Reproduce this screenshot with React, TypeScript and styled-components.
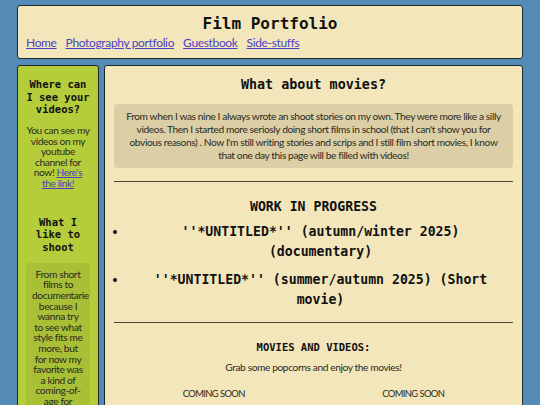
import styled, { createGlobalStyle } from "styled-components";

const GlobalStyle = createGlobalStyle`
  * {
    box-sizing: border-box;
  }

  body {
    margin: 0;
    background: #538ab6;
    font-family: Lato, "Noto Sans", sans-serif;
    color: #2a2a22;
    overflow: hidden;
  }
`;

const Page = styled.div`
  display: flex;
  flex-direction: column;
  gap: 6px;
  padding: 5px 17px 0 17px;
`;

const Box = styled.div<{ $tone?: "cream" | "green" }>`
  border: 1px solid #1d2727;
  border-radius: 3px;
  background: ${(p) => (p.$tone === "green" ? "#b6cd3b" : "#f3e6bb")};
`;

const Header = styled(Box)`
  height: 54px;
  padding: 8px 8px 0 8px;
`;

const Title = styled.h1`
  margin: 0;
  text-align: center;
  font-family: "DejaVu Sans Mono", monospace;
  font-size: 16px;
  line-height: 20px;
  color: #111;
`;

const Nav = styled.nav`
  display: flex;
  gap: 9px;
  margin-top: 1px;
`;

const Link = styled.a`
  color: #4b3fc4;
  text-decoration: underline;
`;

const NavLink = styled(Link)`
  font-size: 12px;
  line-height: 16px;
  letter-spacing: -0.35px;
`;

const Columns = styled.div`
  display: flex;
  gap: 5px;
  align-items: flex-start;
`;

const Sidebar = styled(Box)`
  width: 82px;
  height: 360px;
  padding: 12px 8px 0 8px;
  text-align: center;
`;

const SideHeading = styled.h3<{ $gap?: number }>`
  margin: ${(p) => p.$gap ?? 0}px 0 0 0;
  font-family: "DejaVu Sans Mono", monospace;
  font-size: 10.5px;
  line-height: 12.7px;
  color: #111;
`;

const SideText = styled.p`
  margin: 9px 0 0 0;
  font-size: 10.2px;
  line-height: 10.6px;
  letter-spacing: -0.4px;
`;

const SideCard = styled.div`
  margin-top: 9px;
  padding: 6px 6px;
  border-radius: 4px;
  background: #a8bf36;
  font-size: 10.2px;
  line-height: 10.6px;
  letter-spacing: -0.4px;
`;

const Main = styled(Box)`
  flex: 1;
  height: 360px;
  padding: 10px 9px 0 9px;
  text-align: center;
`;

const MainTitle = styled.h2`
  margin: 0;
  font-family: "DejaVu Sans Mono", monospace;
  font-size: 13.4px;
  line-height: 18px;
  color: #111;
`;

const Note = styled.div`
  margin-top: 10px;
  padding: 6px 8px;
  border-radius: 4px;
  background: #dccfa6;
  font-size: 10.2px;
  line-height: 13px;
  letter-spacing: -0.4px;
`;

const Rule = styled.hr`
  margin: 13px 0 0 0;
  border: none;
  border-top: 1px solid #4a4a3e;
`;

const SectionTitle = styled.h3<{ $small?: boolean }>`
  margin: ${(p) => (p.$small ? "16px 0 0 0" : "17px 0 0 0")};
  font-family: "DejaVu Sans Mono", monospace;
  font-size: ${(p) => (p.$small ? "10.5px" : "13.2px")};
  line-height: 16px;
  color: #111;
`;

const List = styled.ul`
  margin: 7px 0 0 0;
  padding: 0 0 0 14px;
  display: flex;
  flex-direction: column;
  gap: 9px;
`;

const Item = styled.li`
  font-family: "DejaVu Sans Mono", monospace;
  font-weight: bold;
  font-size: 13.2px;
  line-height: 19.5px;
  color: #111;
`;

const Caption = styled.p`
  margin: 5px 0 0 0;
  font-size: 10.2px;
  line-height: 14px;
  letter-spacing: -0.4px;
`;

const Grid = styled.div`
  display: grid;
  grid-template-columns: 1fr 1fr;
  margin-top: 13px;
  font-size: 9.4px;
  line-height: 14px;
  letter-spacing: -0.6px;
`;

export default function App() {
  return (
    <Page>
      <GlobalStyle />
      <Header>
        <Title>Film Portfolio</Title>
        <Nav>
          <NavLink href="#">Home</NavLink>
          <NavLink href="#">Photography portfolio</NavLink>
          <NavLink href="#">Guestbook</NavLink>
          <NavLink href="#">Side-stuffs</NavLink>
        </Nav>
      </Header>
      <Columns>
        <Sidebar $tone="green">
          <SideHeading>Where can I see your videos?</SideHeading>
          <SideText>
            You can see my videos on my youtube channel for now!{" "}
            <Link href="#">Here's the link!</Link>
          </SideText>
          <SideHeading $gap={27}>What I like to shoot</SideHeading>
          <SideCard>
            From short films to documentarie because I wanna try to{"\u00a0"}see what style fits
            me more, but for now my favorite was a kind of coming-of-age for
          </SideCard>
        </Sidebar>
        <Main>
          <MainTitle>What about movies?</MainTitle>
          <Note>
            From when I was nine I always wrote an shoot stories on my own. They were more like a
            silly videos. Then I started more seriosly doing short films in school (that I can't
            show you for obvious reasons) . Now I'm still writing stories and scrips and I still
            film short movies, I know that one day this page will be filled with videos!
          </Note>
          <Rule />
          <SectionTitle>WORK IN PROGRESS</SectionTitle>
          <List>
            <Item>''*UNTITLED*'' (autumn/winter 2025) (documentary)</Item>
            <Item>''*UNTITLED*'' (summer/autumn 2025) (Short movie)</Item>
          </List>
          <Rule />
          <SectionTitle $small>MOVIES AND VIDEOS:</SectionTitle>
          <Caption>Grab some popcorns and enjoy the movies!</Caption>
          <Grid>
            <span>COMING SOON</span>
            <span>COMING SOON</span>
          </Grid>
        </Main>
      </Columns>
    </Page>
  );
}
